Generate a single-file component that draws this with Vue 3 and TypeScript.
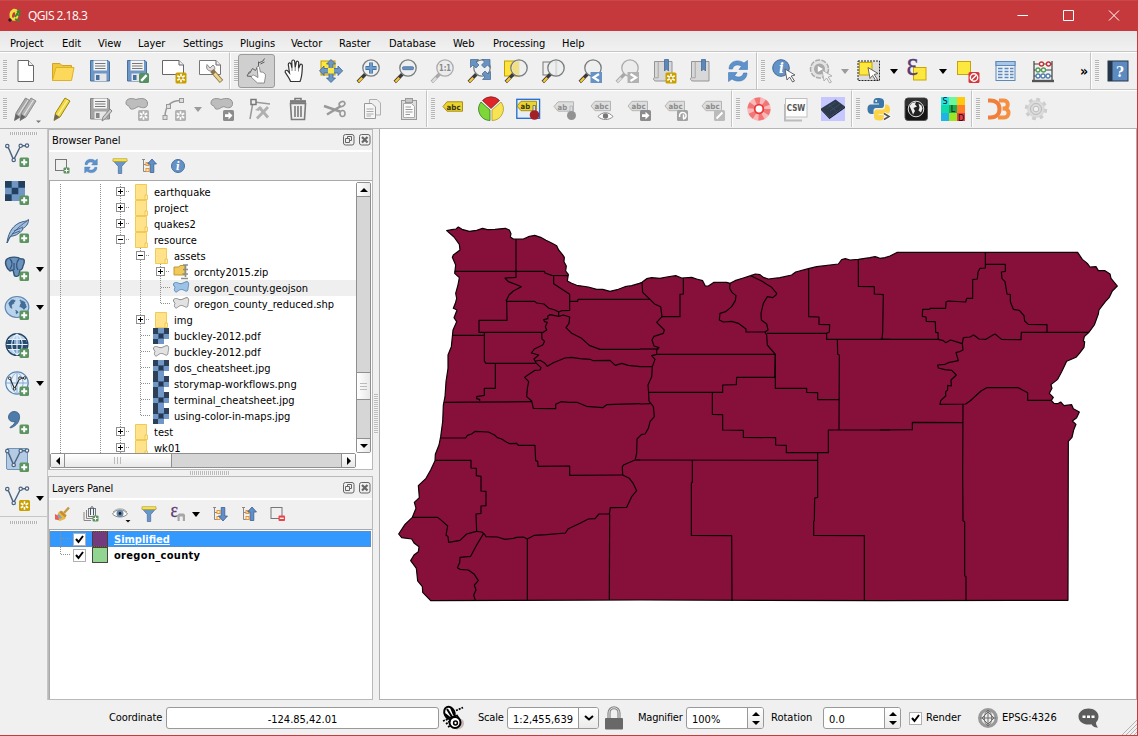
<script setup lang="ts">
interface Tool { icon?: string; w?: number; kind?: 'arrow' | 'more' | 'gap'; active?: boolean; dim?: boolean }
interface Group { w: number; tools: Tool[] }
interface Row { cells: string[]; icon: string; text: string; selected?: boolean }

const menus: { text: string; w: number }[] = [
  { text: 'Project', w: 52 }, { text: 'Edit', w: 36 }, { text: 'View', w: 40 }, { text: 'Layer', w: 45 },
  { text: 'Settings', w: 57 }, { text: 'Plugins', w: 51 }, { text: 'Vector', w: 48 }, { text: 'Raster', w: 50 },
  { text: 'Database', w: 64 }, { text: 'Web', w: 40 }, { text: 'Processing', w: 69 }, { text: 'Help', w: 40 },
]

/* ---------- shared icon fragments ---------- */
const plusBadge = '<rect x="14.5" y="14.5" width="9.5" height="9.5" rx="1.5" fill="#5b9460"/><path d="M19.2 16.2v6M16.2 19.2h6" stroke="#fff" stroke-width="2"/>'
const starBadge = (fill: string, x = 13, y = 13) =>
  `<g transform="translate(${x} ${y})"><rect width="11" height="11" rx="1.5" fill="${fill}"/><path d="M5.5 1.2v8.6M1.8 3.3l7.4 4.4M9.2 3.3L1.8 7.7" stroke="#fff" stroke-width="1.6"/><circle cx="5.5" cy="5.5" r="1.5" fill="${fill}"/></g>`
const arrowBadge = '<rect x="13" y="13" width="11" height="11" rx="1.5" fill="#8c8c8c"/><path d="M15 17.3h3.5v-2.5l4 3.8-4 3.8v-2.5H15z" fill="#fff"/>'
const handle = (c: string, d: string) => `<path d="M9.5 15L1.8 23" stroke="${d}" stroke-width="3.4"/><path d="M6.2 18.8L2.4 22.8" stroke="${c}" stroke-width="2.2"/>`
const lens = (back = '', inner = '') =>
  `${back}${handle('#fcc52c', '#3a3a3a')}<circle cx="15" cy="9" r="8.2" fill="#edf0f0" fill-opacity=".9" stroke="#777b7c" stroke-width="1.3"/>${inner}`
const greyLens = (inner: string) =>
  `${handle('#ddd', '#a8a8a8')}<circle cx="15" cy="9" r="8.2" fill="#ececec" stroke="#ababab" stroke-width="1.3"/>${inner}`
const tag = (fill: string, stroke: string, color: string, t = 'abc', y = 0) =>
  `<g transform="translate(0 ${y})"><path d="M1 8L5 3.3H20.5V12.7H5z" fill="${fill}" stroke="${stroke}"/><text x="4.6" y="11" font-family="DejaVu Sans" font-weight="700" font-size="7.6" textLength="${t.length > 2 ? 14 : 9.5}" lengthAdjust="spacingAndGlyphs" fill="${color}">${t}</text></g>`
const blob = '<path d="M1 6C1 1 7 .8 11 2.500C15 1 22 .5 22.500 6C23 11 18 11.500 15 10C12 8.500 10 13 6 12C4 11.500 5 9 3 8.500C1.500 8 1 7.500 1 6Z" fill="#bdbdbd" stroke="#949494"/>'
const vee = (c = '#4a6482') => `<path d="M2.5 3.5C5 7 6 12 8.7 16.7L15.7 2.8H22" fill="none" stroke="${c}" stroke-width="1.4"/><g fill="#f4f4f4" stroke="${c}" stroke-width="1.2"><circle cx="2.3" cy="3" r="1.7"/><circle cx="8.7" cy="17" r="1.7"/><circle cx="15.7" cy="2.8" r="1.7"/><circle cx="22" cy="2.6" r="1.7"/></g>`
const cursor = (x: number, y: number, f = '#fff', s = '#555') => `<path transform="translate(${x} ${y})" d="M0 0L10 6L6.2 7L9.5 12L7.6 13L4.6 8L2 11Z" fill="${f}" stroke="${s}" stroke-width=".9"/>`
const floppy = (a: string, b: string) => `<path d="M2.5 1.5H20L21.5 3V22H2.5Z" fill="${a}" stroke="${b}"/><rect x="5.5" y="1.5" width="13.5" height="10" fill="#f4f4f4"/><path d="M7 4.5H17.5M7 7H17.5M7 9.5H17.5" stroke="#777"/><rect x="6.5" y="14.5" width="12" height="7.5" fill="#e6e6e6"/><rect x="8" y="16" width="3.5" height="5" fill="${b}"/>`
const pencil = (a: string, b: string, x = 0) => `<g transform="translate(${x} 0)"><path d="M14 1L19 4L9 20L3 23.5L4.5 16Z" fill="${a}" stroke="${b}"/><path d="M16.5 3L7 18" stroke="#fff" stroke-opacity=".65" stroke-width="1.2"/><path d="M4.3 17L8.5 20L3 23.5Z" fill="#666"/></g>`
const book = '<path d="M4 2.5H20V22H4C1 22 1 18.5 2.5 18.5V2.5Z" fill="#d8d8d8" stroke="#949494"/><path d="M6.2 2.5V18.8H2.5" fill="none" stroke="#a5a5a5"/><path d="M12.5 .5H16.5V12L14.5 10L12.5 12Z" fill="#5b87bb" stroke="#3b618f" stroke-width=".7"/>'
const refresh = '<path d="M3 10C3 1.5 13 0 18 4L21.5 1.5V10.5H13L15.5 7.2C12 5 7.5 5.5 6.5 10Z" fill="#5e92cc" stroke="#4478b0" stroke-width=".6"/><path d="M21 14C21 22.5 11 24 6 20L2.5 22.5V13.5H11L8.5 16.8C12 19 16.5 18.5 17.5 14Z" fill="#5e92cc" stroke="#4478b0" stroke-width=".6"/>'
const gear = (f: string, s: string) => `<circle cx="12" cy="12" r="8.7" fill="none" stroke="${s}" stroke-width="5" stroke-dasharray="3.4 3.43"/><circle cx="12" cy="12" r="8.4" fill="${f}" stroke="${s}" stroke-width=".6"/><circle cx="12" cy="12" r="5.5" fill="none" stroke="#aaa" stroke-width=".7"/><circle cx="12" cy="12" r="2.8" fill="#f0f0f0" stroke="#aaa" stroke-width=".7"/>`
const epsilon = (x: number, y: number, size: number, w: number) =>
  `<text x="${x}" y="${y}" font-family="Liberation Serif" font-size="${size}" textLength="${w}" lengthAdjust="spacingAndGlyphs" fill="#5c3a73" stroke="#5c3a73" stroke-width=".3">ε</text>`

const icons: Record<string, string> = {
  new: '<path d="M4 1.5H14.5L19.5 6.5V22.5H4Z" fill="#fff" stroke="#666"/><path d="M14.5 1.5V6.5H19.5" fill="#eee" stroke="#666"/>',
  open: '<path d="M1.5 21.5V4.5H9L11 6.5H20.5V9" fill="#f0c83e" stroke="#d3a41d"/><path d="M1.5 21.5L5 8.5H23L20.5 21.5Z" fill="#fcd95a" stroke="#dfb127"/>',
  save: floppy('#6d97c6', '#46709f'),
  saveAs: floppy('#6d97c6', '#46709f') + '<rect x="14" y="14" width="10" height="10" rx="1.5" fill="#569060"/><path d="M16.2 21.8L21.6 16.2" stroke="#fff" stroke-width="2.4"/>',
  composer: '<path d="M.5 1.5H17L21.5 6V15.5H.5Z" fill="#fff" stroke="#666"/><path d="M17 1.5V6H21.5" fill="#eee" stroke="#666"/>' + starBadge('#c9a000', 13.5, 13.5),
  manager: '<path d="M.5 1.5H17L21.5 6V15.5H.5Z" fill="#fff" stroke="#777"/><path d="M17 1.5V6H21.5" fill="#eee" stroke="#666"/><path d="M8 5.5L11 9L14 6C17.5 9 15.5 13 11.5 12C8 11.500 7 9 8 5.500Z" fill="#ddd" stroke="#888"/><path d="M13 11.500L22.500 22.500" stroke="#8a744a" stroke-width="4.600"/><path d="M15.500 14.500L22 22" stroke="#edd68c" stroke-width="2.800"/>',
  touch: '<path d="M12.500 8L10.500 11.500L7.500 9.500L4.500 14.500M2 17L7 17.500M2 17L4.500 12.500M13.500 7V2.500M13.500 4L18 2L19.500 -.5M15.500 5L19.500 3" fill="none" stroke="#5f5f5f" stroke-width="1"/><path d="M12 8.500C12 6.800 14.200 6.800 14.500 8.500L15.300 13C18.500 12.800 20.700 14.500 20.500 17L19.300 24H12.500L6.500 18.500C6 16.500 8 15.500 9.500 16.500L13 18.500Z" fill="#fff" stroke="#777" stroke-width=".8"/>',
  pan: '<path d="M8.500 22.500C8 20 5 16 3.200 13.300C2.700 11 5 10.700 6 12.200L7.500 14L6.300 5.500C6.200 3.500 8.500 3.300 9 5L10 9L9.800 2.500C10 .5 12.500 .5 12.700 2.500L13.200 8.500L14.200 3.300C14.700 1.500 16.800 2 16.700 4L16.500 9.500L18 6C18.800 4.500 20.700 5.200 20.400 7C20 11 20.500 17 18 22.500Z" fill="#fff" stroke="#333" stroke-width="1.200"/><path d="M10 9V12M13.200 8.500V12M16.500 9.500V12.500" stroke="#666" stroke-width=".8"/>',
  panSel: '<rect x="2" y="2" width="14" height="14" fill="#fde73c" stroke="#bd9a00"/><path d="M12 .5L16.500 5H14V9.500H19V7L23.700 11.800L19 16.500V14H14V19H16.500L12 23.500L7.500 19H10V14H5V16.500L.5 11.800L5 7V9.500H10V5H7.500Z" fill="#6b98c9" stroke="#40658f" stroke-width=".8"/><rect x="9" y="9" width="6" height="5.500" fill="#fde73c"/>',
  zoomIn: lens('', '<path d="M15 3.500V14.500M9.500 9H20.500" stroke="#3e658e" stroke-width="3.800"/><path d="M15 4V14M10 9H20" stroke="#6d9cd0" stroke-width="2.600"/>'),
  zoomOut: lens('', '<rect x="9.500" y="7.700" width="11" height="3" rx="1" fill="#6693c6" stroke="#40658f" stroke-width=".7"/>'),
  zoomOne: greyLens('<text x="15" y="12" font-family="DejaVu Sans" font-weight="700" font-size="8" text-anchor="middle" fill="#888" textLength="12" lengthAdjust="spacingAndGlyphs">1:1</text>'),
  zoomFull: lens() + '<path d="M3.500 .5H11.500L9 3L12 6L9 9L6 6L3.500 8.500ZM23 .5V8.500L20.500 6L17.500 9L14.500 6L17.500 3L15 .5ZM23.500 20.500H15.500L18 18L15 15L18 12L21 15L23.500 12.500Z" fill="#6792c2" stroke="#40658f" stroke-width=".7"/>',
  zoomSel: lens('<rect x=".5" y="2" width="15" height="15" fill="#fce43d" stroke="#c19e08"/>', '<path d="M15 2A7 7 0 0 0 15 16Z" fill="#f1df87"/>'),
  zoomLayer: lens('<rect x="2" y="3" width="14" height="13" fill="#eee" stroke="#777"/>', '<path d="M15 2V16" stroke="#ccc"/>'),
  zoomLast: lens() + '<rect x="12.500" y="13" width="11.500" height="11" fill="#6692c4"/><path d="M21 15L15.500 18.500L21 22" fill="none" stroke="#fff" stroke-width="2.200"/>',
  zoomNext: greyLens('') + '<rect x="12.500" y="13" width="11.500" height="11" fill="#b2b2b2"/><path d="M15.500 15L21 18.500L15.500 22" fill="none" stroke="#fff" stroke-width="2.200"/>',
  newMark: book + starBadge('#c9a000', 13.5, 13.5),
  marks: book,
  refresh,
  identify: '<circle cx="9" cy="9" r="8.300" fill="#6492c7" stroke="#42699a"/><text x="9.300" y="14" font-family="DejaVu Serif" font-style="italic" font-weight="700" font-size="14" text-anchor="middle" fill="#fff">i</text>' + cursor(13, 10),
  action: '<circle cx="10.500" cy="10" r="9" fill="#e3e3e3" stroke="#aaa" stroke-width="1.500" stroke-dasharray="5 1.300"/><circle cx="10.500" cy="10" r="5.500" fill="#aaa"/><path d="M8.800 7L14 10L8.800 13Z" fill="#fff"/>' + cursor(13, 11, '#f2f2f2', '#aaa'),
  select: '<rect x="1" y="2" width="21.500" height="19.500" fill="#ddd" stroke="#222" stroke-dasharray="2 1"/><rect x="2.500" y="3.500" width="12.500" height="12.500" fill="#fde83f" stroke="#c9a500"/>' + cursor(11, 8.5),
  expr: '<rect x="7.500" y="8.500" width="12.500" height="12.500" fill="#fde83f" stroke="#c9a500"/>' + epsilon(.5, 16, 34, 11.5),
  desel: '<rect x="1.500" y="2.500" width="13" height="13" fill="#fde83f" stroke="#c9a500"/><rect x="12.500" y="13" width="11" height="11" rx="1.500" fill="#d6363c"/><circle cx="18" cy="18.500" r="3.700" fill="none" stroke="#fff" stroke-width="1.400"/><path d="M20.500 16L15.500 21" stroke="#fff" stroke-width="1.400"/>',
  table: '<rect x="2" y="2.500" width="19" height="19" fill="#e9f0f8" stroke="#5e88b8"/><rect x="2" y="2.500" width="19" height="4" fill="#a8c6e6" stroke="#5e88b8"/><path d="M4 9.500H8.500M4 12.500H8.500M4 15.500H8.500M4 18.500H8.500M10.500 9.500H14.500M10.500 12.500H14.500M10.500 15.500H14.500M10.500 18.500H14.500M16 9.500H19.500M16 12.500H19.500M16 15.500H19.500M16 18.500H19.500" stroke="#5e88b8" stroke-width="1.300"/>',
  abacus: '<path d="M3 2V21M21 2V21M3 5H21M3 11H21M3 17H21" stroke="#444" stroke-width="1.200" fill="none"/><path d="M1 22H23" stroke="#555" stroke-width="2.400"/><g fill="#fff" stroke-width="1.300"><g stroke="#c22f35"><circle cx="10.500" cy="5" r="2"/><circle cx="17.500" cy="5" r="2"/></g><g stroke="#4f9a50"><circle cx="7" cy="11" r="2"/><circle cx="12.500" cy="11" r="2"/></g><g stroke="#4f7eb3"><circle cx="7" cy="17" r="2"/><circle cx="12" cy="17" r="2"/><circle cx="17" cy="17" r="2"/></g></g>',
  help: '<rect x="2" y="2" width="20" height="20" fill="#5d8ac0" stroke="#26364a"/><rect x="2" y="2" width="4.500" height="20" fill="#25364a"/><text x="14" y="17.500" font-family="DejaVu Serif" font-weight="700" font-size="15" text-anchor="middle" fill="#fff">?</text>',
  edits: pencil('#a8a8a8', '#888', -2.5) + pencil('#b2b2b2', '#8c8c8c', 3) + '<path d="M22 23.500H27L24.500 26Z" fill="#777"/>',
  edit: pencil('#f1d738', '#9c8413'),
  saveEdits: floppy('#a4a4a4', '#858585') + '<path d="M22 12L24 14L17 22L14 24L15 20Z" fill="#ccc" stroke="#888"/>',
  addFeat: blob + starBadge('#b2b2b2', 13, 13),
  addCurve: '<path d="M3 20C3 9 9 3.500 19 3.500" fill="none" stroke="#999" stroke-width="1.500"/><g fill="#ddd" stroke="#999"><rect x="1" y="18.500" width="4" height="4"/><rect x="4.500" y="7.500" width="4" height="4"/><rect x="17.500" y="1.500" width="4" height="4"/></g>' + starBadge('#b2b2b2', 13, 13),
  moveFeat: blob + arrowBadge,
  node: '<path d="M5 5L2 22M5 5L22 7" stroke="#999" stroke-width="1.500"/><rect x="3" y="2.500" width="5" height="5" fill="#eee" stroke="#777" stroke-width="1.500"/><path d="M9 21.500L20 10M11 10L20 20.500" stroke="#b0b0b0" stroke-width="2.800"/><path d="M7 13L12 9.500L14.500 11L10.500 14Z" fill="#b0b0b0"/>',
  trash: '<path d="M9 3V1.500H15V3M4.500 6.500H19.500L18.500 22.500H5.500Z" fill="#efefef" stroke="#7b7b7b" stroke-width="1.600"/><path d="M4 4.500H20" stroke="#7b7b7b" stroke-width="2.800"/><path d="M9 9V20M12 9V20M15 9V20" stroke="#7b7b7b" stroke-width="1.600"/>',
  cut: '<path d="M1 9L17 14.500M4 17.500L18 9" stroke="#999" stroke-width="2.400"/><ellipse cx="19" cy="7" rx="3" ry="2.300" fill="none" stroke="#999" stroke-width="1.600" transform="rotate(-30 19 7)"/><ellipse cx="19.500" cy="16.500" rx="2.500" ry="3" fill="none" stroke="#999" stroke-width="1.600"/>',
  copy: '<path d="M9.500 2.500H17L20.500 6V18H9.500Z" fill="#efefef" stroke="#b0b0b0"/><path d="M4.500 6.500H12L15.500 10V21.500H4.500Z" fill="#f6f6f6" stroke="#999"/><path d="M6.500 12H13.500M6.500 14.500H13.500M6.500 17H13.500M6.500 19H11" stroke="#aaa"/>',
  paste: '<rect x="4.500" y="3.500" width="15" height="19" fill="#ddd" stroke="#999"/><rect x="8.500" y="1.500" width="7" height="4" fill="#c5c5c5" stroke="#999"/><path d="M6.500 6.500H14.500L17.500 9.500V20.500H6.500Z" fill="#fafafa" stroke="#aaa"/><path d="M8.500 10H14M8.500 12.500H15.500M8.500 15H15.500M8.500 17.500H13" stroke="#999"/>',
  label: tag('#ead42d', '#a88f11', '#3b340b', 'abc', 1.5),
  diagram: '<path d="M12 11.500L3.500 3.500A11.500 11.500 0 0 1 20.500 3.500Z" fill="#df252a" stroke="#6c1515" stroke-width=".7"/><path d="M11 13L2 5A11.500 11.500 0 0 0 11 23.500Z" fill="#7dd737" stroke="#2b631c" stroke-width=".7"/><path d="M13 13L22 5A11.500 11.500 0 0 1 13 23.500Z" fill="#f8e452" stroke="#a18e1d" stroke-width=".7"/>',
  pinOn: '<rect x=".8" y="2.300" width="22.800" height="19" fill="#e8eef6" stroke="#1f6bd2" stroke-width="1.300"/>' + tag('#ead42d', '#a88f11', '#3b340b', 'ab', 1) + '<path d="M17 8.500H19.500V17H17Z" fill="#ddd" stroke="#555" stroke-width=".7"/><circle cx="18.500" cy="18" r="4.800" fill="#a32024"/>',
  pin: tag('#dedede', '#b4b4b4', '#8c8c8c', 'ab', 1.5) + '<path d="M17 9H19.500V17H17Z" fill="#ddd" stroke="#aaa" stroke-width=".7"/><circle cx="18.500" cy="18.500" r="4.500" fill="#929292"/>',
  labEye: tag('#dedede', '#b4b4b4', '#8c8c8c', 'abc', 1) + '<path d="M8 19.500C12 14.500 19 14.500 23 19.500C19 23.500 12 23.500 8 19.500Z" fill="#fff" stroke="#888"/><circle cx="15.500" cy="19" r="2.700" fill="#777"/>',
  labMove: tag('#dedede', '#b4b4b4', '#8c8c8c', 'abc', 1) + arrowBadge,
  labRot: tag('#dedede', '#b4b4b4', '#8c8c8c', 'abc', 1) + '<rect x="13" y="13" width="11" height="11" rx="1.500" fill="#a2a2a2"/><path d="M15.800 20A3.300 3.300 0 1 1 19 22M19.500 17.500V21H22" fill="none" stroke="#fff" stroke-width="1.500"/>',
  labEdit: tag('#dedede', '#b4b4b4', '#8c8c8c', 'abc', 1) + '<rect x="13" y="13" width="11" height="11" rx="1.500" fill="#bbb"/><path d="M15.500 21.500L21.500 15.500" stroke="#fff" stroke-width="2"/>',
  ring: '<circle cx="12" cy="12" r="7.800" fill="none" stroke="#f9b9b9" stroke-width="7.800"/><circle cx="12" cy="12" r="8" fill="none" stroke="#f27676" stroke-width="7" stroke-dasharray="4.500 4"/><circle cx="12" cy="12" r="4.300" fill="#fff" stroke="#e83a3a" stroke-width="1.800"/>',
  csw: '<path d="M1 7V23.500H18" fill="none" stroke="#bbb" stroke-width="2"/><rect x="1.500" y="1.500" width="21.500" height="18.500" fill="#fdfdfd" stroke="#c0c0c0"/><text x="12" y="13.500" font-family="DejaVu Sans" font-weight="700" font-size="8.500" text-anchor="middle" fill="#555" textLength="18.500" lengthAdjust="spacingAndGlyphs">CSW</text>',
  chip: '<rect width="24" height="24" fill="#c7c7ff"/><path d="M0 11.500L14.500 2.500L24 9.500L8.500 20.500Z" fill="#2c3a4c"/><path d="M0 11.500L8.500 20.500V22L0 13ZM24 9.500V11L8.500 22V20.500Z" fill="#141d29"/><path d="M6 11L15 5M9 14L19 7M8 8L15 14" stroke="#46566c" stroke-width=".6"/>',
  python: '<path d="M11.500 1C6.500 1 6.500 3 6.500 6.500H12V7.500H4C1 7.500 .5 10 .5 12.500S2 17 4.500 17H6.500V13.500C6.500 11.500 8 11 10 11H14.500C16.500 11 17 9.500 17 8V4.500C17 2 14.500 1 11.500 1Z" fill="#3d77a8"/><path d="M12 23.500C17 23.500 17 21.500 17 18H11.500V17H19.500C22.500 17 23 14.500 23 12S21.500 7.500 19 7.500H18V10.500C18 12 16.500 12.500 14.500 12.500H10C8 12.500 7 14 7 15.500V20C7 22.500 9.500 23.500 12 23.500Z" fill="#fbd447"/><circle cx="9.200" cy="4" r="1" fill="#fff"/><path d="M17 16.500L22 19.500L17 22.500" fill="none" stroke="#fff" stroke-width="3.500"/><path d="M17 16.500L22 19.500L17 22.500" fill="none" stroke="#555" stroke-width="1.700"/>',
  globeApp: '<rect x="1" y="1" width="22.500" height="22.500" rx="3" fill="#151515" stroke="#555"/><path d="M2 4Q2 2 4 2H20Q22.500 2 22.500 4V9H2Z" fill="#444" opacity=".6"/><circle cx="12" cy="12" r="7.800" fill="#222" stroke="#ddd" stroke-width="1"/><path d="M5.500 9L8 6L12 5L11 7.500L13 9.500L9.500 11L11 14L9 17.500L7.500 13.500ZM14.500 6.500L17.500 8.500L18.500 11.500L17 15.500L14.500 13.500L15.500 10.500Z" fill="#eee"/>',
  sld: '<path d="M0 0H8V8H0Z" fill="#20e4e8"/><path d="M8 0H16V8H8Z" fill="#6cf79c"/><path d="M16 0H24V8H16Z" fill="#ffc90e"/><path d="M0 8H8V16H0Z" fill="#12d9a9"/><path d="M8 8H16V16H8Z" fill="#1cab4e"/><path d="M16 8H24V16H16Z" fill="#ff7f27"/><path d="M0 16H8V24H0Z" fill="#1fb4e4"/><path d="M8 16H16V24H8Z" fill="#9be524"/><path d="M16 16H24V24H16Z" fill="#ee3b46"/><g font-family="DejaVu Sans" font-size="9" fill="#111" text-anchor="middle"><text x="4" y="7.300">S</text><text x="12" y="15.300">L</text><text x="20" y="23.500">D</text></g>',
  d3: '<path d="M1 3.500H3.500C9.500 3.500 12.500 7 12.500 12S9.500 20.500 3.500 20.500H1" fill="none" stroke="#f07f3c" stroke-width="4"/><path d="M12 3.500H17C22 3.500 22 11.500 17 11.500H15.500M17 11.500C23 11.500 23 20.500 17 20.500H11" fill="none" stroke="#f58f42" stroke-width="4"/>',
  gear: gear('#dcdcdc', '#cdcdcd'),
  addVector: vee() + plusBadge,
  addRaster: '<rect width="20" height="20" fill="#7096c4"/><path d="M0 0H6.700V6.700H0ZM13.300 0H20V6.700H13.300ZM6.700 6.700H13.300V13.300H6.700ZM0 13.300H6.700V20H0Z" fill="#233f60"/>' + plusBadge,
  feather: '<path d="M2 24C3 16 6 8 14 4C18 2 21 3 23.500 .5C23.500 5 21 8 17 10C19 10 17 12 14 14C11 17 7 17 5 17.500Z" fill="#a1bedd" stroke="#3d5f87"/><path d="M2 24C6 15 12 9 22 2M7 15L15 12M9 12L18 8" fill="none" stroke="#3d5f87" stroke-width=".9"/>' + plusBadge,
  elephant: '<path d="M2 2C6 -1 13 0 16 2C20 1 20 5 18 9C17.500 12 17 13 15 13L14 18C13 20 9 20 9 17L8 13L5 14C1 11 -1 5 2 2Z" fill="#6b92bb" stroke="#2f5379" stroke-width="1.400"/><path d="M5 2C8 5 7 9 5 12M14 2C11 5 11 10 13 13M9 6V13" fill="none" stroke="#2f5379" stroke-width="1.200"/>' + plusBadge,
  worldDots: '<ellipse cx="12" cy="11" rx="11.800" ry="10.500" fill="#b8d3ec" stroke="#5b86b3" stroke-width="1.200"/><path d="M3 7L7 3L11 4L9 8L7 9L7.500 13L5 12ZM14 3L20 5.500L22 11L19 14L16 11.500L14 11L15.500 7ZM10 13L14 16L11 19Z" fill="#436c96" stroke="#d6e6f4" stroke-width=".8" stroke-dasharray="1 1"/>' + plusBadge,
  worldGrid: '<circle cx="12" cy="10.500" r="10.800" fill="#b9d1ea" stroke="#264463" stroke-width="1.400"/><path d="M3 5.500H21L22.500 10.500L21 15.500H3L1.500 10.500Z" fill="#264a70"/><path d="M9 5.500H15V10.500H9ZM9 15.500H15V20H9Z" fill="#7ba3cf"/><path d="M1.500 10.500H22.500M12 0V21M12 0C5 5 5 16 12 21M12 0C19 5 19 16 12 21M3 5.500H21M3 15.500H21" fill="none" stroke="#e4eff9" stroke-width="1.100"/>' + plusBadge,
  worldVec: '<circle cx="12" cy="11" r="11.200" fill="#e8f2fb" stroke="#5a87b5" stroke-width="1.200"/><path d="M1 11H23M12 0V22M12 0C4 5 4 17 12 22M12 0C20 5 20 17 12 22" fill="none" stroke="#83a9d0"/><g transform="translate(3 4) scale(.76)">' + vee('#222') + '</g>' + plusBadge,
  comma: '<path d="M9 1.500C13 1.500 15 4 14.500 8C14 13 10 16.500 5.500 18C5 17.500 5 17 6 16.500C8.500 15 10 13 10 11.500C6 12.500 3.500 10 3.500 7C3.500 4 6 1.500 9 1.500Z" fill="#4d7cab" stroke="#31587f" stroke-width=".8"/>' + plusBadge,
  virtual: '<rect x="1.500" y=".5" width="21" height="21" rx="1.500" fill="#b4cbe3" stroke="#7094b8"/>' + vee() + plusBadge,
  newVector: vee() + starBadge('#c9a000', 14, 14),
}

const small: Record<string, string> = {
  addLayer: '<rect x="1.500" y="1.500" width="11" height="11" fill="#f0f0f0" stroke="#777"/><rect x="9.500" y="9.500" width="6" height="6" rx="1" fill="#5b9460"/><path d="M12.500 10.500V14.500M10.500 12.500H14.500" stroke="#fff"/>',
  refresh: `<g transform="scale(.667)">${refresh}</g>`,
  filter: '<path d="M1 2.500H15L9.700 8.500V15.500H6.300V8.500Z" fill="#6a95c8" stroke="#486f9c" stroke-width=".7"/><rect x="1" y=".8" width="14" height="2.800" fill="#fbe33f" stroke="#988830" stroke-width=".5"/>',
  collapse: '<path d="M2.500 1.500V13.500H6M1 1.500H4M2.500 6.500H6" fill="none" stroke="#888"/><rect x="5" y="4.500" width="3" height="3" fill="#f7f0df" stroke="#f0922b"/><rect x="5" y="10.500" width="3" height="3" fill="#f7f0df" stroke="#f0922b"/><path d="M11 1L15.500 6H12.800V14.500H9.200V6H6.500Z" fill="#5f8fc8" stroke="#38608f" stroke-width=".8"/>',
  expand: '<path d="M2.500 1.500V13.500H6M1 1.500H4M2.500 6.500H6" fill="none" stroke="#888"/><rect x="5" y="4.500" width="3" height="3" fill="#f7f0df" stroke="#f0922b"/><rect x="5" y="10.500" width="3" height="3" fill="#f7f0df" stroke="#f0922b"/><path d="M11 15L15.500 10H12.800V1.500H9.200V10H6.500Z" fill="#5f8fc8" stroke="#38608f" stroke-width=".8"/>',
  info: '<circle cx="8" cy="8" r="6.500" fill="#6492c7" stroke="#46719f"/><text x="8" y="12" font-family="DejaVu Serif" font-style="italic" font-weight="700" font-size="11" text-anchor="middle" fill="#fff">i</text>',
  brush: '<path d="M15 1.500L10 7" stroke="#c39a47" stroke-width="2.400"/><path d="M5 5.500L8.500 5L12.500 9L11 13L6 15L1 13Z" fill="#e9b93c"/><path d="M7 4.500L12.500 9.500L11 11.500L5.500 6.500Z" fill="#c78c35"/><path d="M1 8L4.500 10L5 14L1 13.500Z" fill="#ee5a5f"/><path d="M4.500 8L8 11.500L6 13L3.500 10Z" fill="#7ba2d6"/>',
  group: '<path d="M1 6V14.500H8M3.500 4V12.500H10" fill="none" stroke="#888"/><rect x="5.500" y="2.500" width="7" height="8" fill="#f2f2f2" stroke="#777"/><path d="M7.500 9V3C7.500 0 10.500 0 10.500 3V9" fill="none" stroke="#44586c"/><rect x="9.500" y="9.500" width="6" height="6" rx="1" fill="#5b9460"/><path d="M12.500 10.500V14.500M10.500 12.500H14.500" stroke="#fff"/>',
  eye: '<path d="M.5 8C4 2.500 12 2.500 15.500 8C12 12 4 12 .5 8Z" fill="#fff" stroke="#888"/><path d="M1 6C5 1.500 12 2 15 6" fill="none" stroke="#aaa"/><circle cx="8" cy="7.500" r="3.500" fill="#6488ae"/><circle cx="8" cy="7.500" r="1.400" fill="#222"/><path d="M13.500 14H18.500L16 16.500Z" fill="#111"/>',
  eps: epsilon(.5, 10.5, 20, 7.5) + '<path d="M7.500 15V9.500C7.500 8 9 7.500 10 7.500H13C14.500 7.500 15 8.500 15 9.500V15H12.800V10.500H9.700V15Z" fill="#a6a6a6"/>',
  remove: '<rect x="1" y="1.500" width="11" height="11" fill="#f0f0f0" stroke="#777"/><rect x="8.500" y="9.500" width="6.500" height="5.500" rx="1" fill="#e8454b"/><path d="M9.800 12.300H13.800" stroke="#fff" stroke-width="1.300"/>',
  folder: '<path d="M1.500 .5H12.500V15.500H1.500Z" fill="#ffe28a" stroke="#f0cb55"/><path d="M11 11H13.500V15.500H11Z" fill="#ffe9a6" stroke="#e9c14b" stroke-width=".8"/>',
  zip: '<path d="M1 3H6L7 1.500H12V11H1Z" fill="#f1c95a" stroke="#c29a35"/><path d="M10 1H15M12.500 1V13M8 14.500H15M10 5.500H15M9.500 10H15" stroke="#8e8e86" stroke-width="1.600"/>',
  polyBlue: '<path d="M.5 5C0 2 4 2 6 3.500C9 4.500 11 2 14 1.500C16.500 2 15.500 6 15 8.500C15 12 13 11.500 10.500 10C7 8.500 6 10.500 3.500 12C1 12 1 9 2 7.500Z" fill="#9cc2e5" stroke="#5e8db8"/>',
  polyGrey: '<path d="M.5 5C0 2 4 2 6 3.500C9 4.500 11 2 14 1.500C16.500 2 15.500 6 15 8.500C15 12 13 11.500 10.500 10C7 8.500 6 10.500 3.500 12C1 12 1 9 2 7.500Z" fill="#e2e2e2" stroke="#8c8c8c"/>',
  raster: '<g shape-rendering="crispEdges"><path d="M0 0H16V11H11V16H0Z" fill="#7097c8"/><path d="M0 0H5V6H0ZM11 0H16V6H11ZM0 11H5V16H0Z" fill="#2c4059"/><path d="M5 5H11V11H5Z" fill="#456489"/><path d="M6 6H10V10H6Z" fill="#26384f"/></g>',
}

const cellArt: Record<string, string> = {
  v: '<path d="M10.500 0V16" class="dot"/>',
  tee: '<path d="M10.500 0V16M10.500 7.500H20" class="dot"/>',
  ell: '<path d="M10.500 0V7.500H20" class="dot"/>',
  plus: '<path d="M10.500 0V16M14 7.500H20" class="dot"/><rect x="6.500" y="3.500" width="8" height="8" fill="#fff" stroke="#8f8f8f"/><path d="M8 7.500H13M10.500 5V10" stroke="#000"/>',
  minus: '<path d="M10.500 0V16M14 7.500H20" class="dot"/><rect x="6.500" y="3.500" width="8" height="8" fill="#fff" stroke="#8f8f8f"/><path d="M8 7.500H13" stroke="#000"/>',
  '': '',
}

const t = (icon: string, w = 37): Tool => ({ icon, w })
const arrow = (dim = false): Tool => ({ kind: 'arrow', w: 11, dim })
const bars: Group[][] = [
  [
    { w: 230, tools: ['new', 'open', 'save', 'saveAs', 'composer', 'manager'].map(n => t(n)) },
    {
      w: 527,
      tools: [{ icon: 'touch', w: 37, active: true }, ...['pan', 'panSel', 'zoomIn', 'zoomOut', 'zoomOne', 'zoomFull', 'zoomSel', 'zoomLayer', 'zoomLast', 'zoomNext', 'newMark', 'marks', 'refresh'].map(n => t(n))],
    },
    { w: 334, tools: [t('identify'), t('action'), arrow(true), t('select', 38), arrow(), t('expr', 38), arrow(), t('desel', 39), t('table'), t('abacus'), { kind: 'gap', w: 17 }, { kind: 'more', w: 12 }] },
    { w: 46, tools: [t('help')] },
  ],
  [
    { w: 427, tools: [t('edits'), t('edit'), t('saveEdits'), t('addFeat'), t('addCurve'), arrow(true), t('moveFeat', 38), t('node', 38), t('trash'), t('cut'), t('copy'), t('paste')] },
    { w: 305, tools: ['label', 'diagram', 'pinOn', 'pin', 'labEye', 'labMove', 'labRot', 'labEdit'].map(n => t(n)) },
    { w: 120, tools: [t('ring'), t('csw'), t('chip')] },
    { w: 120, tools: [t('python'), t('globeApp'), t('sld')] },
    { w: 165, tools: [t('d3'), t('gear')] },
  ],
]

const side: { icon: string; menu?: boolean }[] = [
  { icon: 'addVector' }, { icon: 'addRaster' }, { icon: 'feather' }, { icon: 'elephant', menu: true }, { icon: 'worldDots', menu: true },
  { icon: 'worldGrid' }, { icon: 'worldVec', menu: true }, { icon: 'comma' }, { icon: 'virtual' }, { icon: 'newVector', menu: true },
]

const base = ['v', '', 'v']
const rows: Row[] = [
  { cells: [...base, 'plus'], icon: 'folder', text: 'earthquake' },
  { cells: [...base, 'plus'], icon: 'folder', text: 'project' },
  { cells: [...base, 'plus'], icon: 'folder', text: 'quakes2' },
  { cells: [...base, 'minus'], icon: 'folder', text: 'resource' },
  { cells: [...base, 'v', 'minus'], icon: 'folder', text: 'assets' },
  { cells: [...base, 'v', 'v', 'plus'], icon: 'zip', text: 'orcnty2015.zip' },
  { cells: [...base, 'v', 'v', 'tee'], icon: 'polyBlue', text: 'oregon_county.geojson', selected: true },
  { cells: [...base, 'v', 'v', 'ell'], icon: 'polyGrey', text: 'oregon_county_reduced.shp' },
  { cells: [...base, 'v', 'plus'], icon: 'folder', text: 'img' },
  { cells: [...base, 'v', 'tee'], icon: 'raster', text: 'buckley-2012.pdf' },
  { cells: [...base, 'v', 'tee'], icon: 'polyGrey', text: 'buckley-2012.pdf' },
  { cells: [...base, 'v', 'tee'], icon: 'raster', text: 'dos_cheatsheet.jpg' },
  { cells: [...base, 'v', 'tee'], icon: 'raster', text: 'storymap-workflows.png' },
  { cells: [...base, 'v', 'tee'], icon: 'raster', text: 'terminal_cheatsheet.jpg' },
  { cells: [...base, 'v', 'ell'], icon: 'raster', text: 'using-color-in-maps.jpg' },
  { cells: [...base, 'plus'], icon: 'folder', text: 'test' },
  { cells: [...base, 'plus'], icon: 'folder', text: 'wk01' },
]

const browserTools = ['addLayer', 'refresh', 'filter', 'collapse', 'info']
const layerTools = ['brush', 'group', 'eye', 'filter', 'eps', 'arrow', 'expand', 'collapse', 'remove']

/* ---------- map geometry, in thirds of a pixel, by map sheet ---------- */
const west: [number, number] = [0, 0]
const mid: [number, number] = [750, 75]
const east: [number, number] = [1500, 75]
const shift = (pts: string, [dx, dy]: [number, number]): string =>
  pts.trim().split(/\s+/).map(p => {
    const [x, y] = p.split(',').map(Number)
    return `${x + dx},${y + dy}`
  }).join(' ')

const outline = [
  shift('200,47 215,44 228,42 235,36 246,43 268,49 290,46 308,40 322,44 345,43 376,40 388,45 393,56 391,66 400,72 430,72 445,65 464,61 482,67 498,76 515,84 530,92 536,105 547,118 553,127 552,140 559,153 557,168 565,178 562,198 575,205 590,211 625,216 650,223 668,223 690,229 715,223 735,215 755,212 778,205', west),
  shift('36,127 50,116 65,113 90,115 110,111 137,107 155,114 185,112 200,117 218,122 226,138 235,138 252,127 290,127 300,130 315,122 340,114 362,107 376,102 390,104 400,112 415,117 450,113 485,105 497,96 535,86 560,80 625,72 635,59 646,56 660,60 685,58 720,53 735,50 745,53', mid),
  shift('0,55 15,53 30,48 52,37 316,37 593,37 607,58 622,70 630,81 648,80 655,92 675,92 690,102 693,115 712,138 697,153 688,172 676,185 657,210 655,222 643,255 626,278 613,290 610,303 614,305 612,322 600,338 588,352 560,364 545,395 533,418 513,434 516,445 508,460 520,472 514,481 522,490 533,491 542,486 552,497 575,494 580,506 598,516 590,533 577,543 588,553 581,570 576,592 565,604 564,1081 0,1082', east),
  shift('780,1155 152,1157 128,1132 127,1115 113,1098 109,1060 92,1037 102,1020 115,1010 117,995 103,985 95,972 65,968 56,957 75,928 97,907 108,880 103,862 118,848 115,812 138,790 152,765 165,737 166,718 177,690 182,665 188,620 190,570 195,545 198,500 204,460 204,420 214,395 217,365 219,345 230,320 222,308 231,285 220,280 226,265 230,250 227,235 234,210 238,188 224,175 227,150 217,127 220,120 240,105 238,88 222,66', west),
].join(' ')

const borders: string[] = [
  ...[
    '408,72 408,187 375,189 385,200 412,210 424,215 410,223 400,228 387,240 378,259',
    '224,169 493,169 495,174 515,181 565,182',
    '521,182 521,206 569,238 569,286 545,287 536,291 525,285 515,282 507,280 492,267 470,264 464,259 380,259 381,316 297,316 297,352 486,352',
    '569,259 593,259 594,253 780,253',
    '536,289 536,304 510,299 503,304 504,311 491,314 494,320 502,322 496,335 500,345 485,355 486,372 494,379 488,390 463,402 454,414 476,420 462,432 468,444 483,458 480,465 465,466 447,478 434,487 446,500 442,520 440,545 455,558 460,580 527,581 527,568 543,560 565,562 590,562 620,574 668,578 680,569 780,566',
    '536,304 550,300 569,306 567,325 558,338 575,355 605,370 628,391 660,403 780,403',
    '218,361 313,361', '313,352 313,438 318,445 466,445',
    '346,445 346,520 313,520 313,541 290,545 290,551 299,553 299,558',
    '193,562 455,560',
    '466,438 480,436 495,445 502,454 520,443 555,429 575,427 600,431 630,433 640,437 690,436 706,451 725,445 745,451 780,455',
    '182,669 257,669 262,661 275,657 285,649 325,651 345,661 352,668 365,672 380,682 390,686 410,685 415,691 465,691 467,737 473,739 474,754 569,753 569,781 728,780',
    '728,780 727,755 732,749 765,735 780,735',
    '728,780 748,790 760,806 770,827 755,845 740,877 691,878 688,897 657,897 645,911 625,912 600,925 565,941 556,954 500,959 463,961 442,972 430,966 410,967 400,970 375,973 352,966 318,965 313,957 305,951 289,949',
    '166,736 273,736 273,759 289,760 289,782 303,784 303,828 318,829 318,872 303,873 303,895 288,897 290,949 275,953 260,957 240,976 206,982 204,965 198,960 203,933 185,917 173,907 97,907',
    '311,955 290,990 272,1024 240,1027 239,1043 232,1058 240,1063 265,1065 283,1078 295,1097 283,1110 288,1125 281,1140 286,1156',
    '442,972 442,1156', '689,897 688,1155',
  ].map(p => shift(p, west)),
  ...[
    '36,127 38,157 60,178 75,193 92,200 96,230 80,247 103,270 100,280 72,289 66,300 72,318 87,323 80,330 80,343 65,347 75,358 67,380 65,410 54,435 56,460 57,483 70,500 73,530 60,545 55,565 45,582 35,583 21,597 20,640 16,657',
    '30,178 60,178', '160,114 160,162 150,163 150,230 94,230',
    '30,327 85,327', '30,380 67,380', '30,492 62,491',
    '80,343 436,343 434,412 320,412 319,434 278,435 278,457 56,457',
    '300,130 299,145 306,157 318,167 316,182 305,200 287,215 270,220 268,240 280,246 305,244 325,250 348,267 348,276 405,276',
    '362,107 395,123 410,133 425,142 440,160 438,165 428,173 412,170 400,190 393,220 394,240 410,252 414,270 405,276 410,285 412,315 436,343',
    '411,280 590,280 590,298 780,298',
    '536,86 536,230 567,231 567,253 599,254 598,276 590,280',
    '685,58 685,139 733,140 733,162 760,164 758,277 756,298',
    '622,298 623,343 628,345 627,570',
    '436,343 436,445 530,445 530,457 563,458 563,479 627,479',
    '247,457 247,523 278,524 278,570 340,571 340,592 437,593 437,615 469,616 469,638 595,638 595,570 780,570',
    '16,660 563,661', '563,638 563,772 554,774 553,842 551,844 551,886 703,887 703,1083',
    '187,661 187,727 184,729 184,886 305,887 306,1083',
  ].map(p => shift(p, mid)),
  ...[
    '0,298 175,298 190,302 197,308 212,300 235,307 247,311 250,293 270,291 281,285 297,297 318,298 335,287 345,282 365,298 423,299 424,277 626,277',
    '175,298 174,278 167,277 166,245 139,244 138,231 127,229 128,208 148,208 152,205 197,205 198,186 205,183 257,186 260,175 278,175 278,119 292,117 294,97 300,85 316,84 316,37',
    '316,73 376,73 376,94 364,96 366,116 375,125 381,162 391,164 391,185 400,208 418,211 432,227 434,243 445,253 501,254 501,277',
    '247,311 249,330 238,335 228,338 235,362 205,368 195,373 173,375 175,384 195,389 215,391 229,405 213,420 214,438 203,436 203,450 197,455 197,468 182,482 180,493 257,492 270,483 303,453 320,443 415,443 443,458 443,481 514,481',
    '0,570 97,569 97,547 249,548', '249,492 248,700 249,842 254,845 254,1007 258,1010 258,1083',
  ].map(p => shift(p, east)),
]
</script>

<template>
  <div class="window">
    <header class="title">
      <svg class="logo" viewBox="0 0 16 16"><path d="M5 1C9 0 11.500 3 10.500 8C9.500 12 7 14 3 12C.5 8 1 3 5 1Z" fill="#eede42" /><path d="M6 4C7.500 4 7.500 7 6.500 8.500C5.500 10.500 4 10 4 8.500S4.500 5 6 4Z" fill="#c8383a" /><path d="M7 9L12 1.500M8 6L12.500 8M9 3L12 5M7 11L12 13" stroke="#358b2c" stroke-width="1.800" /><path d="M2 10V14M0 12H4" stroke="#111" stroke-width="1" /></svg>
      <span class="caption">QGIS 2.18.3</span>
      <svg class="wm" viewBox="0 0 138 31" fill="none" stroke="#fff"><path d="M17.500 15.500H28M63.500 10.500H73.500V20.500H63.500ZM109 10.500L119 20.500M119 10.500L109 20.500" /></svg>
    </header>

    <nav class="menu"><span v-for="m in menus" :key="m.text" :style="{ width: m.w + 'px' }">{{ m.text }}</span></nav>

    <div v-for="(bar, i) in bars" :key="i" class="bar">
      <div v-for="(g, j) in bar" :key="j" class="group" :style="{ width: g.w + 'px' }">
        <i class="grip" />
        <div v-for="(tool, k) in g.tools" :key="k" class="tool" :class="{ active: tool.active }" :style="{ width: tool.w + 'px' }">
          <svg v-if="tool.icon" class="ic" viewBox="0 0 24 24" v-html="icons[tool.icon]" />
          <i v-else-if="tool.kind === 'arrow'" class="down" :class="{ dim: tool.dim }" />
          <b v-else-if="tool.kind === 'more'" class="more">»</b>
        </div>
      </div>
    </div>

    <main class="body">
      <aside class="side">
        <div class="side-box">
          <i class="hgrip" />
          <div v-for="s in side" :key="s.icon" class="side-row">
            <svg class="ic" viewBox="0 0 24 24" v-html="icons[s.icon]" /><i v-if="s.menu" class="down" />
          </div>
        </div>
        <i class="hgrip second" />
      </aside>

      <div class="docks">
        <section class="dock browser">
          <div class="dock-title">
            <span>Browser Panel</span>
            <svg class="dock-btns" viewBox="0 0 28 12" fill="none" stroke="#666"><rect x=".5" y=".5" width="10.500" height="10.500" rx="2" /><rect x="16.500" y=".5" width="10.500" height="10.500" rx="2" /><path d="M4.500 5V2.500H8.500V6.500H7M2.500 4.500H6.500V8.500H2.500Z" /><path d="M19 3L24.500 8.500M24.500 3L19 8.500" stroke-width="2.200" /></svg>
          </div>
          <div class="dock-tools"><svg v-for="n in browserTools" :key="n" class="sm" viewBox="0 0 16 16" v-html="small[n]" /></div>
          <div class="tree">
            <div class="tree-main">
              <div class="rows">
                <div v-for="(r, n) in rows" :key="n" class="row" :class="{ selected: r.selected }">
                  <svg v-for="(c, m) in r.cells" :key="m" class="cell" viewBox="0 0 20 16" v-html="cellArt[c]" />
                  <svg class="node" :class="{ wide: r.icon !== 'folder' }" viewBox="0 0 16 16" v-html="small[r.icon]" />
                  <span>{{ r.text }}</span>
                </div>
              </div>
              <div class="vscroll"><div class="sb top"><i class="up" /></div><div class="thumb"><i /></div><div class="sb bottom"><i class="dn" /></div></div>
            </div>
            <div class="hscroll"><div class="sb left"><i class="lf" /></div><div class="thumb"><i /></div><div class="track" /><div class="sb right"><i class="rt" /></div></div>
          </div>
        </section>
        <div class="split"><i /></div>
        <section class="dock layers">
          <div class="dock-title">
            <span>Layers Panel</span>
            <svg class="dock-btns" viewBox="0 0 28 12" fill="none" stroke="#666"><rect x=".5" y=".5" width="10.500" height="10.500" rx="2" /><rect x="16.500" y=".5" width="10.500" height="10.500" rx="2" /><path d="M4.500 5V2.500H8.500V6.500H7M2.500 4.500H6.500V8.500H2.500Z" /><path d="M19 3L24.500 8.500M24.500 3L19 8.500" stroke-width="2.200" /></svg>
          </div>
          <div class="dock-tools">
            <template v-for="(n, m) in layerTools" :key="m"><i v-if="n === 'arrow'" class="down mid" /><svg v-else class="sm" viewBox="0 0 16 16" v-html="small[n]" /></template>
          </div>
          <div class="layer-list">
            <div class="layer current">
              <svg class="cell" viewBox="0 0 20 16" v-html="cellArt.tee" />
              <svg class="check" viewBox="0 0 13 13"><rect x=".5" y=".5" width="12" height="12" fill="#fff" stroke="#b0b0b0" /><path d="M3 6L5.500 9L10 3" fill="none" stroke="#000" stroke-width="2" /></svg>
              <i class="swatch purple" /><u>Simplified</u>
            </div>
            <div class="layer">
              <svg class="cell" viewBox="0 0 20 16" v-html="cellArt.ell" />
              <svg class="check" viewBox="0 0 13 13"><rect x=".5" y=".5" width="12" height="12" fill="#fff" stroke="#b0b0b0" /><path d="M3 6L5.500 9L10 3" fill="none" stroke="#000" stroke-width="2" /></svg>
              <i class="swatch green" /><span>oregon_county</span>
            </div>
          </div>
        </section>
      </div>

      <div class="vsplit"><i /></div>
      <div class="canvas">
        <svg viewBox="0 -258 2268 1710">
          <polygon :points="outline" fill="#86103a" />
          <g fill="none" stroke="#0c0006" stroke-width="3.500" stroke-linejoin="round">
            <polygon :points="outline" /><polyline v-for="(b, n) in borders" :key="n" :points="b" />
          </g>
        </svg>
      </div>
    </main>

    <footer class="status">
      <label class="s-coord">Coordinate</label><div class="field coord">-124.85,42.01</div>
      <svg class="mouse" viewBox="0 0 24 24"><path d="M14 10L21 14C24 19 20 24 14 23.500Z" fill="#c9b8b8" /><ellipse cx="7.500" cy="7" rx="5" ry="6.500" transform="rotate(-25 7.500 7)" fill="#fff" stroke="#000" stroke-width="2" /><path d="M5 3L10 11M9 1.500L12 9M3 8L8 12" stroke="#000" stroke-width="2" /><path d="M7 12L15 9.500L18 14" fill="#fff" stroke="#000" stroke-width="1.600" /><circle cx="13" cy="16.500" r="5.500" fill="#fff" stroke="#000" stroke-width="2" /><circle cx="13.500" cy="17" r="1.900" fill="none" stroke="#000" stroke-width="1.500" /><path d="M14 4.500L21 1.500M1 15L6 13M4 18L8 15M6 21L9 19" stroke="#000" stroke-width="1.800" stroke-dasharray="2 1" /></svg>
      <label class="s-scale">Scale</label><div class="field scale"><span>1:2,455,639</span><em><svg viewBox="0 0 10 6"><path d="M1 1L5 4.500L9 1" fill="none" stroke="#000" stroke-width="2" /></svg></em></div>
      <svg class="lock" viewBox="0 0 18 24"><path d="M4 13V7C4 0 14 0 14 7V13" fill="none" stroke="#888" stroke-width="3.200" /><path d="M4 13V7C4 0 14 0 14 7V13" fill="none" stroke="#ddd" stroke-width="1" /><rect y="12" width="18" height="11.500" rx="1" fill="#686868" /></svg>
      <label class="s-mag">Magnifier</label><div class="field mag"><span>100%</span><em class="spin"><i class="up" /><i class="dn" /></em></div>
      <label class="s-rot">Rotation</label><div class="field rot"><span>0.0</span><em class="spin"><i class="up" /><i class="dn" /></em></div>
      <svg class="check" viewBox="0 0 13 13"><rect x=".5" y=".5" width="12" height="12" fill="#fff" stroke="#b0b0b0" /><path d="M3 6L5.500 9L10 3" fill="none" stroke="#000" stroke-width="2" /></svg>
      <label class="s-render">Render</label>
      <svg class="globe" viewBox="0 0 20 20"><circle cx="10" cy="10" r="8.300" fill="#ececec" stroke="#999" stroke-width="3.400" /><path d="M2 10H18M10 2V18M10 2C5 6 5 14 10 18M10 2C15 6 15 14 10 18M10 4L16 10L10 16L4 10Z" fill="none" stroke="#6d6d6d" /></svg>
      <label class="s-epsg">EPSG:4326</label>
      <svg class="speech" viewBox="0 0 21 20"><path d="M10.500 .5C16 .5 20.500 4 20.500 8.500C20.500 11 19.500 13 18 14.500C18 17 19 18 20 19.500C16 19.500 14.500 18 13.500 16.300C6 17.500 .5 14 .5 8.500C.5 4 5 .5 10.500 .5Z" fill="#5c5c5c" /><path d="M4.500 7.500H7.500V10H4.500ZM9 7.500H12V10H9ZM13.500 7.500H16.500V10H13.500Z" fill="#fff" /></svg>
      <svg class="corner" viewBox="0 0 16 16"><path d="M1 16L16 1M5 16L16 5M9 16L16 9M13 16L16 13" stroke="#b4b4b4" /></svg>
    </footer>
  </div>
</template>

<style>
html, body { margin: 0; background: #f0f0f0; }
.dot { fill: none; stroke: #8f8f8f; stroke-width: 1; stroke-dasharray: 1 1; shape-rendering: crispEdges; }
</style>

<style scoped>
* { box-sizing: border-box; }
svg { display: block; flex: none; overflow: visible; }
.window { width: 1138px; height: 736px; overflow: hidden; display: flex; flex-direction: column; background: #f0f0f0; color: #000; font: 11px/16px "DejaVu Sans Condensed", "DejaVu Sans", sans-serif; font-stretch: condensed; letter-spacing: 0; border-right: 1px solid #c73b3e; border-bottom: 1px solid #c73b3e; white-space: nowrap; }
.title { height: 31px; flex: none; display: flex; align-items: center; background: #c5393c; border-top: 1px solid #c9484a; color: #fff; padding-left: 8px; font: 12px/28px "Open Sans", sans-serif; font-stretch: normal; letter-spacing: -0.5px; }
.logo { width: 16px; height: 16px; }
.caption { margin: 0 0 0 4px; flex: 1; }
.wm { width: 138px; height: 31px; margin: -1px -1px 0 0; }
.menu { height: 20px; flex: none; display: flex; padding: 4px 0 0 10px; background: linear-gradient(#e7e7e7, #f1f1f1); line-height: 17px; letter-spacing: -0.05px; }
.menu span { flex: none; }
.bar { flex: none; display: flex; height: 38px; border-top: 1px solid #c6c6c6; }
.group { flex: none; display: flex; align-items: center; height: 37px; border-right: 1px solid #c3c3c3; border-top: 1px solid #fff; }
.group + .group { border-left: 1px solid #fff; }
.group:last-child { border-right: 0; }
.grip { flex: none; width: 4px; height: 22px; margin: 0 0 0 3px; background: repeating-linear-gradient(#b5b5b5 0 1px, #f4f4f4 1px 2px); }
.tool { flex: none; height: 34px; display: flex; align-items: center; justify-content: center; }
.tool.active { background: #cfcfcf; border: 1px solid #9a9a9a; border-radius: 3px; height: 34px; }
.ic { width: 24px; height: 24px; }
.down { display: block; flex: none; width: 0; height: 0; border: 4.500px solid transparent; border-top: 5px solid #000; border-bottom: 0; }
.down.dim { border-top-color: #9b9b9b; }
.more { font-size: 14px; margin-top: -1px; }
.body { flex: none; height: 572px; display: flex; margin-top: 1px; border-top: 1px solid #b5b5b5; }
.side { width: 48px; flex: none; border-right: 1px solid #c6c6c6; display: flex; flex-direction: column; }
.side-box { height: 388px; border-bottom: 1px solid #c6c6c6; padding-top: 3px; }
.hgrip { display: block; width: 28px; height: 3px; margin: 0 0 1px 10px; background: repeating-linear-gradient(90deg, #b5b5b5 0 1px, #f4f4f4 1px 2px); }
.hgrip.second { margin-top: 4px; }
.side-row { height: 38px; display: flex; align-items: center; padding-left: 5px; margin-top: 0.150px; }
.side-row .down { margin-left: 7px; }
.docks { width: 325px; flex: none; display: flex; flex-direction: column; }
.dock { border: 1px solid #b9b9b9; display: flex; flex-direction: column; }
.browser { height: 342px; }
.layers { height: 224px; }
.split { height: 6px; display: flex; align-items: center; }
.split i { width: 40px; height: 4px; margin-left: 142px; background: repeating-linear-gradient(90deg, #bbb 0 1px, #f4f4f4 1px 2px); }
.dock-title { height: 22px; flex: none; border-bottom: 2px solid #fff; display: flex; justify-content: space-between; padding: 1px 1px 0 3px; line-height: 20px; letter-spacing: -0.12px; }
.layers .dock-title { height: 23px; line-height: 22px; }
.dock-btns { width: 28px; height: 12px; margin: 3px 0 0; }
.layers .dock-btns { margin-top: 4px; }
.dock-tools { height: 28px; flex: none; display: flex; align-items: center; gap: 13px; padding-left: 5px; }
.layers .dock-tools { height: 29px; padding-bottom: 1px; }
.sm { width: 16px; height: 16px; }
.down.mid { margin: 0 -1px 0 -7px; }
.tree { flex: 1; background: #fff; border-top: 1px solid #a9a9a9; border-left: 1px solid #a9a9a9; padding: 1px 0 0; }
.tree-main { display: flex; height: 271px; }
.rows { width: 306px; height: 271px; overflow: hidden; padding-top: 2px; }
.row { height: 16px; display: flex; line-height: 18px; letter-spacing: 0.030px; }
.row.selected { background: #efefef; }
.cell { width: 20px; height: 16px; }
.node { width: 16px; height: 16px; margin: 0 4px 0 4px; }
.node.wide { margin: 0 5px 0 3px; }
.vscroll { width: 15px; border: 1px solid #8f8f8f; border-radius: 2px; background: #d6d6d6; display: flex; flex-direction: column; }
.sb { flex: none; width: 13px; height: 14px; background: linear-gradient(90deg, #fff, #e8e8e8); display: flex; align-items: center; justify-content: center; }
.vscroll .top { border-bottom: 1px solid #8f8f8f; }
.vscroll .bottom { border-top: 1px solid #8f8f8f; margin-top: auto; }
.up, .dn { display: block; width: 0; height: 0; border: 4px solid transparent; }
.up { border-top: 0; border-bottom: 4px solid #000; }
.dn { border-bottom: 0; border-top: 4px solid #000; }
.lf, .rt { display: block; width: 0; height: 0; border: 4px solid transparent; }
.lf { border-left: 0; border-right: 4px solid #000; }
.rt { border-right: 0; border-left: 4px solid #000; }
.vscroll .thumb { margin-top: 175px; height: 28px; background: linear-gradient(90deg, #fff, #e8e8e8); border: solid #8f8f8f; border-width: 1px 0; display: flex; align-items: center; justify-content: center; }
.vscroll .thumb i { width: 7px; height: 7px; background: repeating-linear-gradient(#bbb 0 1px, transparent 1px 3px); }
.hscroll { width: 306px; height: 15px; border: 1px solid #8f8f8f; border-radius: 2px; display: flex; background: #d6d6d6; }
.hscroll .sb { height: 13px; width: 14px; background: linear-gradient(#fff, #e8e8e8); }
.hscroll .left { border-right: 1px solid #8f8f8f; }
.hscroll .right { border-left: 1px solid #8f8f8f; }
.hscroll .thumb { width: 107px; height: 13px; background: linear-gradient(#fff, #e8e8e8); border-right: 1px solid #8f8f8f; display: flex; align-items: center; justify-content: center; }
.hscroll .thumb i { width: 8px; height: 7px; background: repeating-linear-gradient(90deg, #bbb 0 1px, transparent 1px 3px); }
.track { flex: 1; }
.layer-list { flex: 1; background: #fff; border-top: 1px solid #a9a9a9; border-left: 1px solid #a9a9a9; padding: 1px 1px 0 0; }
.layer { height: 16px; display: flex; align-items: center; font-weight: 700; line-height: 16px; }
.layer u, .layer span { padding-top: 2px; }
.layer span { letter-spacing: 0.320px; }
.layer.current { background: #3399ff; color: #fff; outline: 1px dotted rgba(192, 122, 55, 0.5); outline-offset: -1px; }
.check { width: 13px; height: 13px; }
.layer .check { margin: 0 6px 0 3px; }
.swatch { width: 16px; height: 16px; border: 1px solid #444; margin-right: 6px; flex: none; }
.purple { background: #733a7d; }
.green { background: #91d591; }
.vsplit { width: 6px; flex: none; display: flex; align-items: center; justify-content: center; }
.vsplit i { width: 4px; height: 40px; margin-top: -2px; background: repeating-linear-gradient(#bbb 0 1px, #f4f4f4 1px 2px); }
.canvas { flex: 1; border: 1px solid #b0b0b0; border-top: 0; background: #fff; height: 571px; overflow: hidden; }
.canvas svg { width: 756px; height: 570px; }
.status { flex: 1; display: flex; align-items: center; padding: 1px 0 0; }
.status label { flex: none; }
.field { flex: none; height: 22px; background: #fff; border: 1px solid #999; border-radius: 3px; display: flex; line-height: 23px; letter-spacing: 0; }
.field span { flex: 1; padding-left: 5px; }
.field em { width: 20px; border-left: 1px solid #999; background: linear-gradient(#fff, #eaeaea); border-radius: 0 2px 2px 0; display: flex; align-items: center; justify-content: center; }
.field em svg { width: 10px; height: 6px; }
.field .spin { width: 16px; flex-direction: column; gap: 5px; }
.coord { width: 273px; justify-content: center; }
.s-coord { width: 57px; margin-left: 109px; letter-spacing: -0.1px; }
.mouse { width: 24px; height: 24px; margin: 0 12px 0 3px; }
.s-scale { width: 29px; letter-spacing: -0.2px; }
.scale { width: 92px; }
.lock { width: 18px; height: 24px; margin: 0 15px 0 6px; }
.s-mag { width: 48px; letter-spacing: -0.2px; }
.mag { width: 78px; }
.s-rot { width: 59px; padding-left: 7px; }
.rot { width: 78px; }
.status > .check { margin: 0 4px 0 8px; }
.s-render { width: 52px; }
.globe { width: 20px; height: 20px; }
.s-epsg { width: 80px; padding-left: 4px; }
.speech { width: 21px; height: 20px; flex: none; }
.corner { width: 16px; height: 16px; margin-left: auto; align-self: flex-end; }
</style>
